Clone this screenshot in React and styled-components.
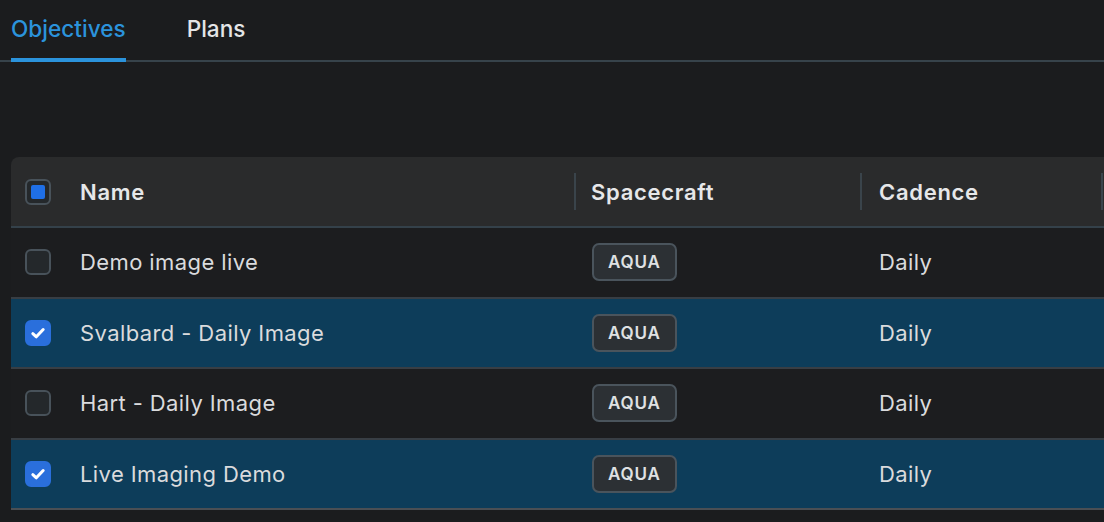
import React from 'react';
import styled, { createGlobalStyle } from 'styled-components';

const GlobalStyle = createGlobalStyle`
  html, body {
    margin: 0;
    padding: 0;
    background: #1b1c1e;
    overflow: hidden;
  }
  body {
    font-family: Inter, "Noto Sans", "Liberation Sans", sans-serif;
    color: #dcdddf;
  }
`

const rows = [
  { name: 'Demo image live', craft: 'AQUA', cadence: 'Daily', selected: false },
  { name: 'Svalbard - Daily Image', craft: 'AQUA', cadence: 'Daily', selected: true },
  { name: 'Hart - Daily Image', craft: 'AQUA', cadence: 'Daily', selected: false },
  { name: 'Live Imaging Demo', craft: 'AQUA', cadence: 'Daily', selected: true },
]

const Check = ({ state }) => {
  if (state === 'checked') {
    return (
      <Box checked>
        <svg width="18" height="18" viewBox="0 0 16 16">
          <path d="M3.4 8.6 L6.5 11.4 L12.6 4.9" fill="none" stroke="#fff" strokeWidth="2.7" strokeLinecap="round" strokeLinejoin="round" />
        </svg>
      </Box>
    )
  }
  return <Box>{state === 'mixed' && <Inner />}</Box>
}

const App = () => {
  return (
    <>
      <GlobalStyle />
      <Page>
        <TabList>
          <Tab active>Objectives</Tab>
          <Tab>Plans</Tab>
        </TabList>

        <Table>
          <HeadRow>
            <CheckCell><Check state="mixed" /></CheckCell>
            <HeadCell first>Name</HeadCell>
            <HeadCell>Spacecraft</HeadCell>
            <HeadCell pad={17}>Cadence</HeadCell>
            <HeadCell />
          </HeadRow>
          {rows.map((row) => (
            <Row key={row.name} selected={row.selected}>
              <CheckCell><Check state={row.selected ? 'checked' : 'off'} /></CheckCell>
              <Cell>{row.name}</Cell>
              <Cell><Badge>{row.craft}</Badge></Cell>
              <Cell pad={17}>{row.cadence}</Cell>
              <Cell />
            </Row>
          ))}
        </Table>
      </Page>
    </>
  );
}

const Page = styled.div`
  width: 1104px;
  height: 522px;
  overflow: hidden;
`

const TabList = styled.div`
  display: flex;
  gap: 61px;
  padding: 12px 0 0 11px;
  border-bottom: 2px solid #37434b;
  height: 48px;
  box-sizing: content-box;
`

const Tab = styled.div`
  font-size: 22.6px;
  font-weight: 500;
  line-height: 26px;
  height: 46px;
  box-sizing: border-box;
  color: ${({ active }) => active ? '#2b93dc' : '#e4e5e7'};
  border-bottom: 4px solid ${({ active }) => active ? '#2b93dc' : 'transparent'};
  margin-bottom: -2px;
  align-self: flex-end;
`

const Table = styled.div`
  margin: 95px 0 0 11px;
  width: 1300px;
`

const grid = `
  display: grid;
  grid-template-columns: 54px 511px 286px 241px 208px;
  align-items: center;
`

const HeadRow = styled.div`
  ${grid}
  height: 69px;
  background: #2a2b2c;
  border-top-left-radius: 8px;
  border-bottom: 2px solid #34414a;
`

const Row = styled.div`
  ${grid}
  height: 68.5px;
  background: ${({ selected }) => selected ? '#0d3d5a' : '#1c1d1f'};
  border-bottom: 2px solid #383e44;
  &:last-child {
    border-bottom-color: #4a4f54;
  }
`

const CheckCell = styled.div`
  padding-left: 14px;
  display: flex;
  align-items: center;
`

const HeadCell = styled.div`
  height: 37px;
  display: flex;
  align-items: center;
  padding-left: ${({ pad }) => pad || 15}px;
  border-left: ${({ first }) => first ? 'none' : '2px solid #3a444b'};
  margin-left: ${({ first }) => first ? '0' : '-2px'};
  font-size: 22px;
  font-weight: 600;
  letter-spacing: 0.7px;
  color: #e6e7e9;
`

const Cell = styled.div`
  padding-left: ${({ pad }) => pad || 15}px;
  font-size: 22px;
  font-weight: 400;
  letter-spacing: 0.4px;
  color: #dadbdd;
  display: flex;
  align-items: center;
`

const Box = styled.div`
  width: 26px;
  height: 26px;
  box-sizing: border-box;
  border-radius: 6px;
  border: 2px solid ${({ checked }) => checked ? '#2a6fdc' : '#48525a'};
  background: ${({ checked }) => checked ? '#2a6fdc' : '#24282b'};
  display: flex;
  align-items: center;
  justify-content: center;
`

const Inner = styled.div`
  width: 14px;
  height: 14px;
  border-radius: 2px;
  background: #1f6fe6;
`

const Badge = styled.div`
  margin-left: 1px;
  height: 38px;
  box-sizing: border-box;
  padding: 0 14px;
  display: flex;
  align-items: center;
  background: #2c3034;
  border: 2px solid #4a545c;
  border-radius: 7px;
  font-size: 17px;
  font-weight: 600;
  letter-spacing: 0.8px;
  color: #dfe1e3;
`

export default App
